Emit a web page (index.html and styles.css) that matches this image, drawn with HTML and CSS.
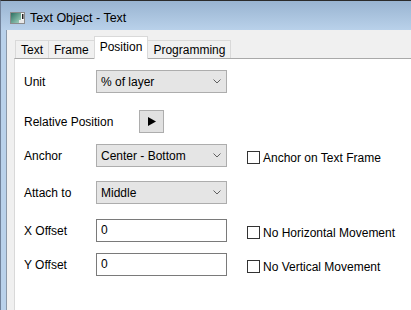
FILE: index.html
```html
<!DOCTYPE html>
<html lang="en">

<head>
  <meta charset="UTF-8" />
  <title>Text Object - Text</title>
  <link rel="stylesheet" href="styles.css">
</head>

<body>
  <div class="window">
    <div class="titlebar">
      <svg class="app-icon" width="15" height="12" viewBox="0 0 15 12">
        <defs>
          <linearGradient id="ig" x1="0" y1="0" x2="1" y2="1">
            <stop offset="0" stop-color="#2c6f62" />
            <stop offset="1" stop-color="#a8d8c4" />
          </linearGradient>
        </defs>
        <rect x="0.5" y="0.5" width="14" height="11" fill="#f4f4f4" stroke="#8a8a8a" />
        <rect x="1" y="1" width="10" height="10" fill="url(#ig)" />
        <rect x="9" y="8" width="5" height="3" fill="#e8e8e8" />
        <rect x="12" y="2" width="1.5" height="5" fill="#222" />
      </svg>
      <span class="title">Text Object - Text</span>
    </div>
    <div class="frame">
      <div class="client">
        <ul class="tabs">
          <li>Text</li>
          <li>Frame</li>
          <li class="active">Position</li>
          <li>Programming</li>
        </ul>
        <div class="panel">
          <div class="row">
            <span class="lbl">Unit</span>
            <div class="combo"><span>% of layer</span>
              <svg width="8" height="5" viewBox="0 0 8 5"><polyline points="0.5,0.5 4,4 7.5,0.5" fill="none" stroke="#606060" /></svg>
            </div>
          </div>
          <div class="row row-rel">
            <span class="lbl">Relative Position</span>
            <div class="btn">
              <svg width="8" height="9" viewBox="0 0 8 9"><polygon points="0,0 8,4.5 0,9" fill="#000" /></svg>
            </div>
          </div>
          <div class="row row-anchor">
            <span class="lbl">Anchor</span>
            <div class="combo"><span>Center - Bottom</span>
              <svg width="8" height="5" viewBox="0 0 8 5"><polyline points="0.5,0.5 4,4 7.5,0.5" fill="none" stroke="#606060" /></svg>
            </div>
            <label class="check"><span class="box"></span>Anchor on Text Frame</label>
          </div>
          <div class="row row-attach">
            <span class="lbl">Attach to</span>
            <div class="combo"><span>Middle</span>
              <svg width="8" height="5" viewBox="0 0 8 5"><polyline points="0.5,0.5 4,4 7.5,0.5" fill="none" stroke="#606060" /></svg>
            </div>
          </div>
          <div class="row row-x">
            <span class="lbl">X Offset</span>
            <div class="field">0</div>
            <label class="check"><span class="box"></span>No Horizontal Movement</label>
          </div>
          <div class="row row-y">
            <span class="lbl">Y Offset</span>
            <div class="field">0</div>
            <label class="check"><span class="box"></span>No Vertical Movement</label>
          </div>
        </div>
      </div>
    </div>
  </div>
</body>

</html>
```

FILE: styles.css
```css
* {
  margin: 0;
  padding: 0;
}

html,
body {
  height: 100%;
  overflow: hidden;
  background: #fff;
}

body {
  font-family: "Liberation Sans", Arial, sans-serif;
  font-size: 12px;
  color: #000;
}

.window {
  width: 411px;
  height: 310px;
  box-sizing: border-box;
  border-top: 1px solid #2b2b2b;
  border-left: 1px solid #71829a;
  background: #b9d1ea;
  display: flex;
  flex-direction: column;
  overflow: hidden;
}

/* title bar */
.titlebar {
  height: 29px;
  flex: none;
  box-sizing: border-box;
  padding: 4px 0 0 9px;
  display: flex;
  align-items: center;
  gap: 5px;
  background: linear-gradient(#99b4d1, #b9d1ea);
}

.title {
  font-size: 12.5px;
}

.frame {
  flex: 1;
  display: flex;
  padding-left: 5px;
}

.client {
  flex: 1;
  display: flex;
  flex-direction: column;
  background: #f0f0f0;
  border-left: 1px solid #8b98a8;
  padding: 6px 0 0 7px;
}

/* tabs */
.tabs {
  list-style: none;
  display: flex;
  align-items: flex-end;
  height: 22px;
  padding-left: 1px;
}

.tabs li {
  height: 18px;
  box-sizing: border-box;
  padding: 1px 5px 0;
  line-height: 16px;
  border: 1px solid #d9d9d9;
  border-bottom: none;
  margin-left: -1px;
  background: #f0f0f0;
}

.tabs li:first-child {
  margin-left: 0;
}

.tabs li.active {
  height: 23px;
  margin-bottom: -1px;
  padding-top: 2px;
  background: #fff;
  position: relative;
  z-index: 1;
}

.panel {
  flex: 1;
  background: #fff;
  border-top: 1px solid #a9a9a9;
  border-left: 1px solid #d9d9d9;
  padding: 11px 0 0 9px;
}

/* rows */
.row {
  display: flex;
  align-items: center;
  height: 23px;
}

.row-rel {
  margin-top: 17px;
}

.row-anchor {
  margin-top: 11px;
}

.row-attach {
  margin-top: 14px;
}

.row-x {
  margin-top: 15px;
}

.row-y {
  margin-top: 11px;
}

.lbl {
  width: 72px;
  flex: none;
  white-space: nowrap;
}

.combo {
  width: 131px;
  height: 23px;
  box-sizing: border-box;
  border: 1px solid #adadad;
  background: #e5e5e5;
  display: flex;
  align-items: center;
  justify-content: space-between;
  padding: 0 5px 0 4px;
}

.field {
  width: 131px;
  height: 23px;
  box-sizing: border-box;
  border: 1px solid #7a7a7a;
  background: #fff;
  padding-left: 4px;
  line-height: 21px;
}

.btn {
  width: 25px;
  height: 23px;
  box-sizing: border-box;
  margin-left: 43px;
  border: 1px solid #adadad;
  background: #e1e1e1;
  display: flex;
  align-items: center;
  justify-content: center;
}

.check {
  margin: 4px 0 0 20px;
  display: flex;
  align-items: center;
  gap: 3px;
  white-space: nowrap;
}

.check .box {
  width: 13px;
  height: 13px;
  box-sizing: border-box;
  border: 1px solid #333;
  background: #fff;
}
```
